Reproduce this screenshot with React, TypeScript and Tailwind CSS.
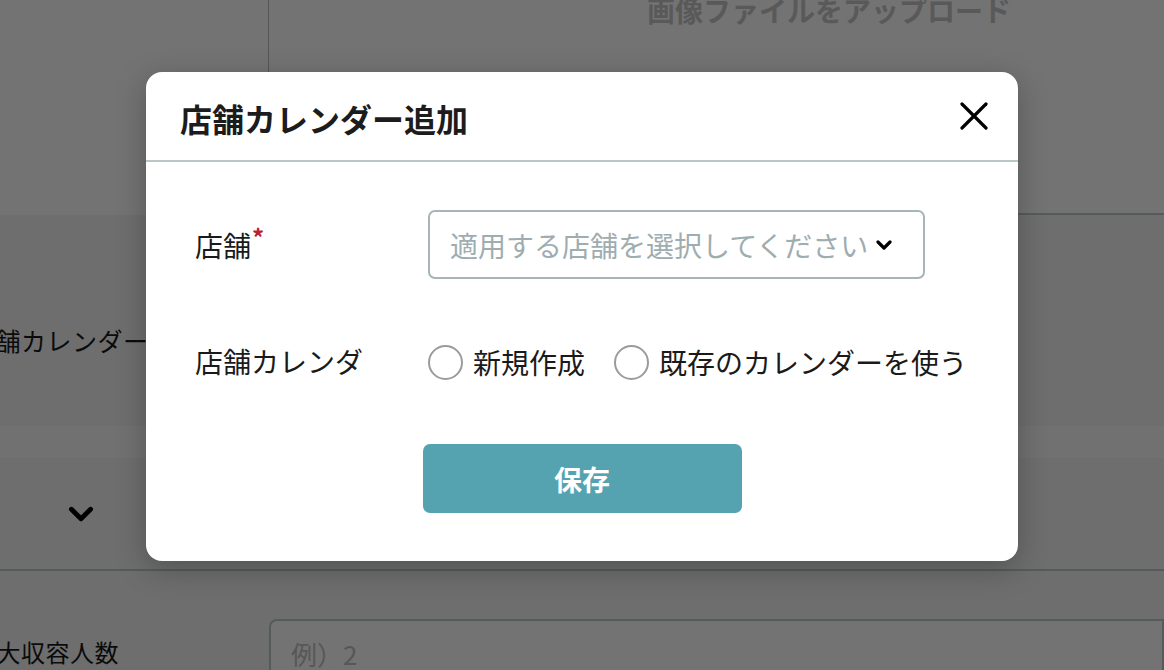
import React from 'react';

const Chevron: React.FC<{ className?: string; strokeWidth?: number }> = ({ className, strokeWidth = 3 }) => (
  <svg viewBox="0 0 16 10" className={className} fill="none" stroke="currentColor" strokeWidth={strokeWidth} strokeLinecap="round" strokeLinejoin="round">
    <polyline points="2,2 8,8 14,2" />
  </svg>
);

const Radio: React.FC<{ label: string }> = ({ label }) => (
  <label className="flex items-center gap-[10px] cursor-pointer">
    <span className="w-[35px] h-[35px] rounded-full border-2 border-[#9b9b9b] bg-white" />
    <span className="text-[28px] leading-none text-[#1a1a1a]">{label}</span>
  </label>
);

const App: React.FC = () => {
  return (
    <div className="relative h-[670px] w-full overflow-hidden bg-white font-['Noto_Sans_CJK_JP','Noto_Sans',sans-serif]">
      {/* Page behind the dialog */}
      <div className="flex h-[215px]">
        <div className="w-[269px] shrink-0 border-r border-[#b8c2c4]" />
        <div className="flex-1 border-b-2 border-[#bdcacc] pl-[378px]">
          <p className="mt-[-8px] text-[28px] leading-[36px] font-bold text-[#c6c6c6] whitespace-nowrap">画像ファイルをアップロード</p>
        </div>
      </div>

      <div className="flex h-[211px] items-center bg-[#f3f3f3]">
        <p className="ml-[-30px] pt-[40px] text-[25px] leading-none text-[#1a1a1a] tracking-[0.5px] whitespace-nowrap">店舗カレンダー</p>
      </div>

      <div className="h-[32px] bg-[#fbfbfb]" />

      <div className="flex h-[113px] items-center border-b-2 border-[#bdcacc] bg-[#f3f3f3] pl-[68px]">
        <Chevron className="w-[26px] h-[16px] text-black" strokeWidth={3} />
      </div>

      <div className="flex bg-[#f3f3f3] pt-[48px]">
        <div className="w-[269px] shrink-0 pt-[21px]">
          <p className="ml-[-28px] text-[24px] leading-none text-[#1a1a1a] tracking-[0.5px] whitespace-nowrap">最大収容人数</p>
        </div>
        <div className="flex-1 h-[80px] rounded-tl-[8px] border-2 border-[#bdcacc] bg-white pl-[20px] pt-[20px]">
          <span className="text-[26px] leading-none text-[#c2c2c2]">例）2</span>
        </div>
      </div>

      {/* Overlay */}
      <div className="absolute inset-0 bg-black/55 flex justify-center pt-[72px]">
        <div className="w-[872px] h-fit rounded-[16px] bg-white shadow-[0_8px_30px_rgba(0,0,0,0.25)]">
          {/* Header */}
          <div className="flex h-[90px] items-center justify-between border-b-2 border-[#b9c7c9] pl-[34px] pr-[30px]">
            <h3 className="mt-[4px] text-[32px] leading-none font-bold text-[#1c1c1c]">店舗カレンダー追加</h3>
            <button className="w-[28px] h-[28px] text-black">
              <svg viewBox="0 0 28 28" className="w-[28px] h-[28px]" fill="none" stroke="currentColor" strokeWidth={3.2} strokeLinecap="round">
                <line x1="2" y1="2" x2="26" y2="26" />
                <line x1="26" y1="2" x2="2" y2="26" />
              </svg>
            </button>
          </div>

          {/* Body */}
          <div className="pt-[48px] pb-[48px]">
            <div className="flex items-center pl-[49px]">
              <div className="w-[233px] shrink-0 flex items-start">
                <span className="text-[28px] leading-none text-[#1a1a1a]">店舗</span>
                <span className="ml-[1px] mt-[-6px] text-[24px] leading-none font-bold text-[#b8232f]">*</span>
              </div>
              <div className="flex h-[69px] w-[497px] items-center gap-[8px] rounded-[7px] border-2 border-[#a7b5b7] pl-[20px]">
                <span className="text-[28px] leading-none text-[#9eadb0] whitespace-nowrap">適用する店舗を選択してください</span>
                <Chevron className="w-[16px] h-[10px] text-black" strokeWidth={3.2} />
              </div>
            </div>

            <div className="mt-[63px] flex h-[40px] items-center pl-[49px]">
              <div className="w-[233px] shrink-0">
                <span className="text-[28px] leading-none text-[#1a1a1a]">店舗カレンダ</span>
              </div>
              <div className="flex items-center gap-[29px]">
                <Radio label="新規作成" />
                <Radio label="既存のカレンダーを使う" />
              </div>
            </div>

            <div className="mt-[62px] flex justify-center">
              <button className="h-[69px] w-[319px] rounded-[7px] bg-[#55a3b1] text-[28px] leading-none font-bold text-white">
                保存
              </button>
            </div>
          </div>
        </div>
      </div>
    </div>
  );
};

export default App;
